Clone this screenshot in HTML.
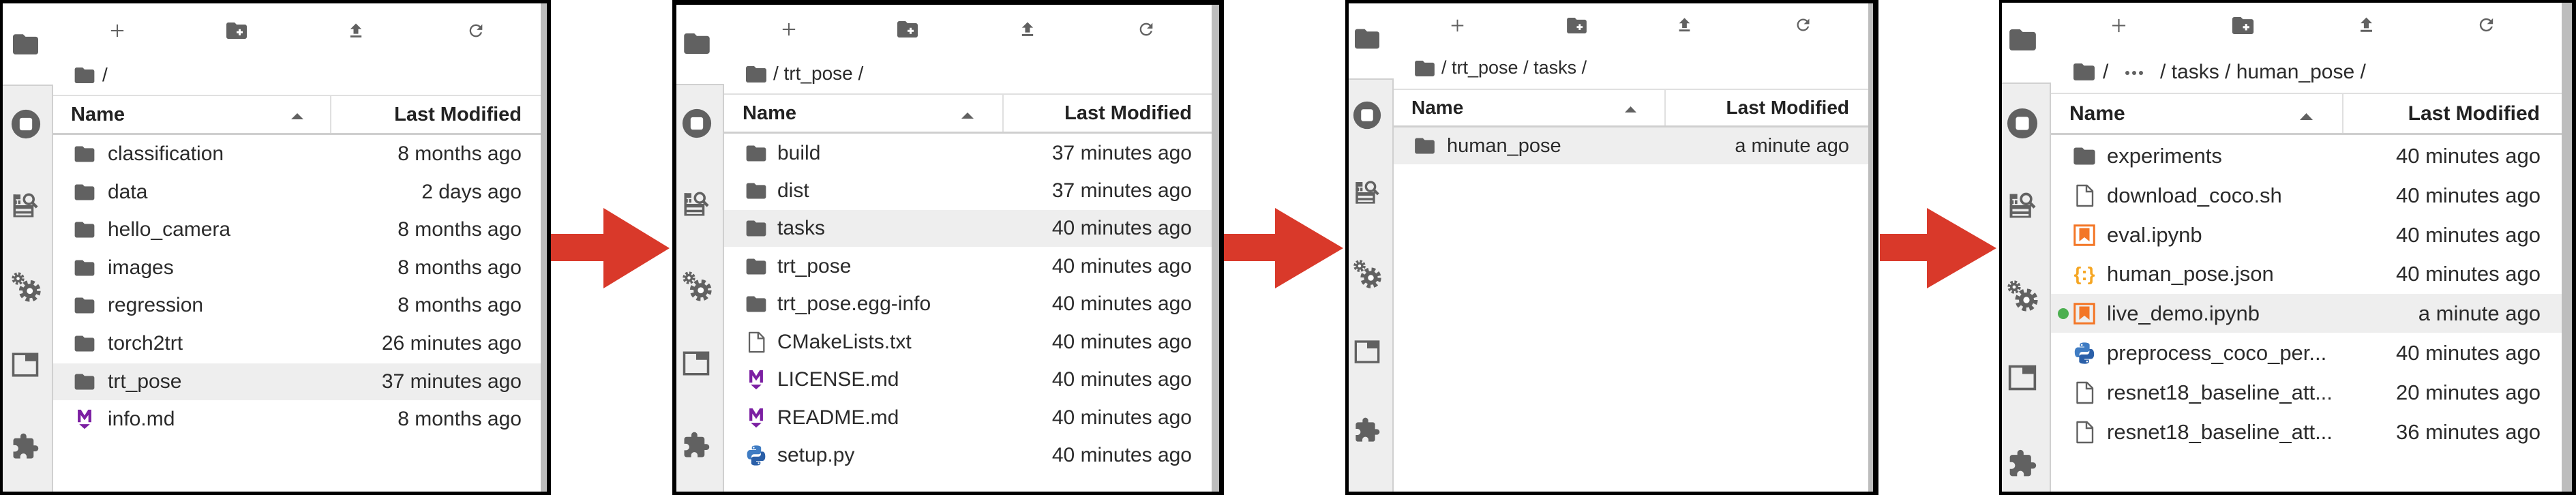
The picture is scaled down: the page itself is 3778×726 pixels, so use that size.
<!DOCTYPE html>
<html><head><meta charset="utf-8">
<style>
*{margin:0;padding:0;box-sizing:border-box}
html,body{width:3778px;height:726px;background:#fff;overflow:hidden;font-family:"Liberation Sans",Arial,sans-serif;color:#333}
.p{position:absolute;top:0;height:726px;background:#fff;overflow:hidden}
.a{position:absolute}
.bk{position:absolute;background:#000}
.sb{position:absolute;left:0;bottom:0;background:#eee;border-right:2px solid #d0d0d0;border-top:2px solid #d0d0d0}
.strip{position:absolute;top:0;bottom:0;background:#bdbdbd}
.hdr{position:absolute;border-top:2px solid #e0e0e0;border-bottom:3px solid #cfcfcf;font-weight:bold;color:#222}
.row{position:absolute;height:54px}
.row.hl{background:#eee}
.nm{position:absolute;top:0;line-height:54px;white-space:nowrap;color:#2b2b2b}
.dt{position:absolute;top:0;line-height:54px;white-space:nowrap;color:#2b2b2b}
.ic{position:absolute;top:50%;transform:translateY(-50%)}
.bc{position:absolute;white-space:nowrap;color:#2b2b2b}
.arrow{position:absolute}
</style></head><body>
<svg width="0" height="0" style="position:absolute">
<defs>
<symbol id="fold" viewBox="2 4 20 16"><path d="M10 4H4c-1.1 0-2 .9-2 2v12c0 1.1.9 2 2 2h16c1.1 0 2-.9 2-2V8c0-1.1-.9-2-2-2h-8l-2-2z" fill="#616161"/></symbol>
<symbol id="nfold" viewBox="2 4 20 16"><path d="M10 4H4c-1.1 0-2 .9-2 2v12c0 1.1.9 2 2 2h16c1.1 0 2-.9 2-2V8c0-1.1-.9-2-2-2h-8l-2-2z" fill="#616161"/><path d="M15 10.5v6M12 13.5h6" stroke="#fff" stroke-width="2"/></symbol>
<symbol id="plus" viewBox="0 0 24 24"><path d="M12 2v20M2 12h20" stroke="#616161" stroke-width="2.2"/></symbol>
<symbol id="up" viewBox="0 0 24 24"><path d="M9 16h6v-6h4l-7-7-7 7h4zm-4 2h14v2.5H5z" fill="#616161"/></symbol>
<symbol id="rf" viewBox="0 0 24 24"><path d="M17.65 6.35C16.2 4.9 14.21 4 12 4c-4.42 0-7.990 3.58-7.990 8s3.57 8 7.990 8c3.73 0 6.84-2.55 7.73-6h-2.08c-.82 2.33-3.04 4-5.65 4-3.31 0-6-2.69-6-6s2.69-6 6-6c1.66 0 3.14.69 4.22 1.78L13 11h7V4l-2.35 2.35z" fill="#616161"/></symbol>
<symbol id="stop" viewBox="0 0 24 24"><circle cx="12" cy="12" r="11.5" fill="#616161"/><rect x="7" y="7" width="10" height="10" rx="1.8" fill="#fff"/></symbol>
<symbol id="prop" viewBox="0 0 24 24"><g fill="#616161"><rect x="2" y="3" width="6" height="4"/><rect x="2" y="8" width="3" height="3"/><rect x="6" y="8" width="2" height="3"/><path d="M2 12h17v10H2zM4 15v2h13v-2zM4 19v1.5h13V19z" fill-rule="evenodd"/><rect x="2" y="3" width="2" height="19"/></g><circle cx="15" cy="7" r="4" fill="none" stroke="#616161" stroke-width="2"/><path d="M17.8 9.8l4 4" stroke="#616161" stroke-width="2.4"/></symbol>
<symbol id="gear" viewBox="0 0 24 24"><g fill="#616161"><circle cx="6" cy="5.5" r="3"/><circle cx="6" cy="5.5" r="3.8" fill="none" stroke="#616161" stroke-width="2" stroke-dasharray="1.8 1.2"/><circle cx="15" cy="15" r="5.5"/><circle cx="15" cy="15" r="6.8" fill="none" stroke="#616161" stroke-width="3" stroke-dasharray="3 2.4"/></g><circle cx="6" cy="5.5" r="1.2" fill="#fff"/><circle cx="15" cy="15" r="2.3" fill="#fff"/></symbol>
<symbol id="tab" viewBox="0 0 24 24"><rect x="2" y="3" width="20" height="18" fill="none" stroke="#616161" stroke-width="2"/><rect x="12" y="3" width="10" height="6" fill="#616161"/></symbol>
<symbol id="puz" viewBox="0 0 24 24"><path d="M20.5 11H19V7c0-1.1-.9-2-2-2h-4V3.5C13 2.12 11.88 1 10.5 1S8 2.12 8 3.5V5H4c-1.1 0-1.990.9-1.990 2v3.8H3.5c1.490 0 2.7 1.21 2.7 2.7s-1.21 2.7-2.7 2.7H2V20c0 1.1.9 2 2 2h3.8v-1.5c0-1.490 1.21-2.7 2.7-2.7 1.490 0 2.7 1.21 2.7 2.7V22H17c1.1 0 2-.9 2-2v-4h1.5c1.38 0 2.5-1.12 2.5-2.5S21.88 11 20.5 11z" fill="#616161"/></symbol>
<symbol id="file" viewBox="0 0 24 24"><path d="M5 2h9.5L20 7.5V22H5z" fill="none" stroke="#616161" stroke-width="1.6" stroke-linejoin="round"/><path d="M14 2.3V8h5.8" fill="none" stroke="#616161" stroke-width="1.6"/></symbol>
<symbol id="md" viewBox="0 0 24 24"><path d="M5 2h3.2l3.8 6 3.8-6H19v13h-3V7.5l-4 5.5-4-5.5V15H5z" fill="#7b1fa2"/><path d="M6.5 17h11l-5.5 5z" fill="#7b1fa2"/></symbol>
<symbol id="nb" viewBox="0 0 24 24"><rect x="2.5" y="2.5" width="19" height="19" fill="none" stroke="#f37626" stroke-width="2"/><path d="M7 5h10v13l-5-4-5 4z" fill="#f37626"/></symbol>
<symbol id="py" viewBox="0 0 24 24"><path d="M11.9 1C7 1 7.3 3.1 7.3 3.1v2.2h4.7V6H5.4S2 5.6 2 11c0 5.4 3 5.2 3 5.2h1.8v-2.5s-.1-3 2.9-3h4.9s2.8 0 2.8-2.7V3.5S17.8 1 11.9 1zM9.3 2.5a.9.9 0 110 1.8.9.9 0 010-1.8z" fill="#3f7cc3"/><path d="M12.1 23c4.9 0 4.6-2.1 4.6-2.1v-2.2H12V18h6.6s3.4.4 3.4-5c0-5.4-3-5.2-3-5.2h-1.8v2.5s.1 3-2.9 3H9.4s-2.8 0-2.8 2.7v4.5S6.2 23 12.1 23zm2.6-1.5a.9.9 0 110-1.8.9.9 0 010 1.8z" fill="#2a5fa8"/></symbol>
</defs></svg>

<!-- ARROWS -->
<svg class="arrow" style="left:0;top:0" width="3778" height="726">
<polygon points="807,343 885,343 885,305 982,364 885,423 885,383 807,383" fill="#d9392a"/>
<polygon points="1795,343 1870,343 1870,305 1970,364 1870,423 1870,383 1795,383" fill="#d9392a"/>
<polygon points="2757,343 2826,343 2826,305 2928,364 2826,423 2826,383 2757,383" fill="#d9392a"/>
</svg>

<!-- PANEL 1 -->
<div class="p" style="left:0;width:808px;font-size:30px">
  <div class="sb" style="top:124px;width:78px"></div>
  <svg class="a" style="left:19px;top:50px" width="37" height="30"><use href="#fold"/></svg>
  <svg class="a" style="left:16px;top:160px" width="44" height="44"><use href="#stop"/></svg>
  <svg class="a" style="left:16px;top:280px" width="42" height="42"><use href="#prop"/></svg>
  <svg class="a" style="left:15px;top:398px" width="46" height="46"><use href="#gear"/></svg>
  <svg class="a" style="left:16px;top:514px" width="42" height="42"><use href="#tab"/></svg>
  <svg class="a" style="left:16px;top:634px" width="42" height="42"><use href="#puz"/></svg>
  <svg class="a" style="left:161px;top:34px" width="22" height="22"><use href="#plus"/></svg>
  <svg class="a" style="left:331px;top:33px" width="32" height="24"><use href="#nfold"/></svg>
  <svg class="a" style="left:508px;top:31px" width="28" height="28"><use href="#up"/></svg>
  <svg class="a" style="left:684px;top:31px" width="28" height="28"><use href="#rf"/></svg>
  <svg class="a" style="left:109px;top:99px" width="30" height="23"><use href="#fold"/></svg>
  <div class="bc" style="left:150px;top:94px;line-height:32px;font-size:28px">/</div>
  <div class="hdr" style="left:78px;top:139px;width:715px;height:59px;font-size:29px">
    <div class="a" style="left:26px;top:0;line-height:54px">Name</div>
    <svg class="a" style="left:349px;top:24px" width="18" height="10"><polygon points="0,10 9,1 18,10" fill="#616161"/></svg>
    <div class="a" style="left:406px;top:0;width:2px;height:54px;background:#e0e0e0"></div>
    <div class="a" style="right:28px;top:0;line-height:54px">Last Modified</div>
  </div>
  <div style="position:absolute;left:78px;top:0;width:715px">
    <div class="row" style="top:199px;width:715px"><svg class="ic" style="left:31px" width="30" height="23"><use href="#fold"/></svg><span class="nm" style="left:80px">classification</span><span class="dt" style="right:28px">8 months ago</span></div>
    <div class="row" style="top:255px;width:715px"><svg class="ic" style="left:31px" width="30" height="23"><use href="#fold"/></svg><span class="nm" style="left:80px">data</span><span class="dt" style="right:28px">2 days ago</span></div>
    <div class="row" style="top:310px;width:715px"><svg class="ic" style="left:31px" width="30" height="23"><use href="#fold"/></svg><span class="nm" style="left:80px">hello_camera</span><span class="dt" style="right:28px">8 months ago</span></div>
    <div class="row" style="top:366px;width:715px"><svg class="ic" style="left:31px" width="30" height="23"><use href="#fold"/></svg><span class="nm" style="left:80px">images</span><span class="dt" style="right:28px">8 months ago</span></div>
    <div class="row" style="top:421px;width:715px"><svg class="ic" style="left:31px" width="30" height="23"><use href="#fold"/></svg><span class="nm" style="left:80px">regression</span><span class="dt" style="right:28px">8 months ago</span></div>
    <div class="row" style="top:477px;width:715px"><svg class="ic" style="left:31px" width="30" height="23"><use href="#fold"/></svg><span class="nm" style="left:80px">torch2trt</span><span class="dt" style="right:28px">26 minutes ago</span></div>
    <div class="row hl" style="top:533px;width:715px"><svg class="ic" style="left:31px" width="30" height="23"><use href="#fold"/></svg><span class="nm" style="left:80px">trt_pose</span><span class="dt" style="right:28px">37 minutes ago</span></div>
    <div class="row" style="top:588px;width:715px"><svg class="ic" style="left:29px" width="34" height="34"><use href="#md"/></svg><span class="nm" style="left:80px">info.md</span><span class="dt" style="right:28px">8 months ago</span></div>
  </div>
  <div class="strip" style="left:793px;width:9px"></div>
  <div class="bk" style="left:0;top:0;width:808px;height:5px"></div>
  <div class="bk" style="left:0;bottom:0;width:808px;height:5px"></div>
  <div class="bk" style="left:0;top:0;width:4px;height:726px"></div>
  <div class="bk" style="left:802px;top:0;width:6px;height:726px"></div>
</div>

<!-- PANEL 2 -->
<div class="p" style="left:986px;width:809px;font-size:30px">
  <div class="sb" style="top:123px;width:76px"></div>
  <svg class="a" style="left:17px;top:49px" width="38" height="30"><use href="#fold"/></svg>
  <svg class="a" style="left:14px;top:159px" width="44" height="44"><use href="#stop"/></svg>
  <svg class="a" style="left:14px;top:278px" width="42" height="42"><use href="#prop"/></svg>
  <svg class="a" style="left:13px;top:397px" width="46" height="46"><use href="#gear"/></svg>
  <svg class="a" style="left:14px;top:512px" width="42" height="42"><use href="#tab"/></svg>
  <svg class="a" style="left:14px;top:632px" width="42" height="42"><use href="#puz"/></svg>
  <svg class="a" style="left:160px;top:32px" width="22" height="22"><use href="#plus"/></svg>
  <svg class="a" style="left:329px;top:31px" width="32" height="24"><use href="#nfold"/></svg>
  <svg class="a" style="left:507px;top:29px" width="28" height="28"><use href="#up"/></svg>
  <svg class="a" style="left:681px;top:29px" width="28" height="28"><use href="#rf"/></svg>
  <svg class="a" style="left:108px;top:97px" width="30" height="24"><use href="#fold"/></svg>
  <div class="bc" style="left:148px;top:92px;line-height:32px;font-size:28px">/ trt_pose /</div>
  <div class="hdr" style="left:76px;top:137px;width:715px;height:59px;font-size:29px">
    <div class="a" style="left:27px;top:0;line-height:54px">Name</div>
    <svg class="a" style="left:348px;top:25px" width="18" height="10"><polygon points="0,10 9,1 18,10" fill="#616161"/></svg>
    <div class="a" style="left:408px;top:0;width:2px;height:54px;background:#e0e0e0"></div>
    <div class="a" style="right:29px;top:0;line-height:54px">Last Modified</div>
  </div>
  <div style="position:absolute;left:76px;top:0;width:715px">
    <div class="row" style="top:198px;width:715px"><svg class="ic" style="left:32px" width="30" height="23"><use href="#fold"/></svg><span class="nm" style="left:78px">build</span><span class="dt" style="right:29px">37 minutes ago</span></div>
    <div class="row" style="top:253px;width:715px"><svg class="ic" style="left:32px" width="30" height="23"><use href="#fold"/></svg><span class="nm" style="left:78px">dist</span><span class="dt" style="right:29px">37 minutes ago</span></div>
    <div class="row hl" style="top:308px;width:715px"><svg class="ic" style="left:32px" width="30" height="23"><use href="#fold"/></svg><span class="nm" style="left:78px">tasks</span><span class="dt" style="right:29px">40 minutes ago</span></div>
    <div class="row" style="top:364px;width:715px"><svg class="ic" style="left:32px" width="30" height="23"><use href="#fold"/></svg><span class="nm" style="left:78px">trt_pose</span><span class="dt" style="right:29px">40 minutes ago</span></div>
    <div class="row" style="top:419px;width:715px"><svg class="ic" style="left:32px" width="30" height="23"><use href="#fold"/></svg><span class="nm" style="left:78px">trt_pose.egg-info</span><span class="dt" style="right:29px">40 minutes ago</span></div>
    <div class="row" style="top:475px;width:715px"><svg class="ic" style="left:30px" width="34" height="34"><use href="#file"/></svg><span class="nm" style="left:78px">CMakeLists.txt</span><span class="dt" style="right:29px">40 minutes ago</span></div>
    <div class="row" style="top:530px;width:715px"><svg class="ic" style="left:30px" width="34" height="34"><use href="#md"/></svg><span class="nm" style="left:78px">LICENSE.md</span><span class="dt" style="right:29px">40 minutes ago</span></div>
    <div class="row" style="top:586px;width:715px"><svg class="ic" style="left:30px" width="34" height="34"><use href="#md"/></svg><span class="nm" style="left:78px">README.md</span><span class="dt" style="right:29px">40 minutes ago</span></div>
    <div class="row" style="top:641px;width:715px"><svg class="ic" style="left:31px" width="32" height="32"><use href="#py"/></svg><span class="nm" style="left:78px">setup.py</span><span class="dt" style="right:29px">40 minutes ago</span></div>
  </div>
  <div class="strip" style="left:791px;width:11px"></div>
  <div class="bk" style="left:0;top:0;width:809px;height:7px"></div>
  <div class="bk" style="left:0;bottom:0;width:809px;height:5px"></div>
  <div class="bk" style="left:0;top:0;width:6px;height:726px"></div>
  <div class="bk" style="left:802px;top:0;width:7px;height:726px"></div>
</div>

<!-- PANEL 3 -->
<div class="p" style="left:1973px;width:782px;font-size:29px">
  <div class="sb" style="top:115px;width:71px"></div>
  <svg class="a" style="left:14px;top:42px" width="36" height="30"><use href="#fold"/></svg>
  <svg class="a" style="left:11px;top:148px" width="42" height="42"><use href="#stop"/></svg>
  <svg class="a" style="left:12px;top:262px" width="40" height="40"><use href="#prop"/></svg>
  <svg class="a" style="left:10px;top:380px" width="44" height="44"><use href="#gear"/></svg>
  <svg class="a" style="left:12px;top:496px" width="40" height="40"><use href="#tab"/></svg>
  <svg class="a" style="left:12px;top:611px" width="40" height="40"><use href="#puz"/></svg>
  <svg class="a" style="left:154px;top:27px" width="21" height="21"><use href="#plus"/></svg>
  <svg class="a" style="left:324px;top:26px" width="31" height="23"><use href="#nfold"/></svg>
  <svg class="a" style="left:484px;top:23px" width="27" height="27"><use href="#up"/></svg>
  <svg class="a" style="left:658px;top:23px" width="27" height="27"><use href="#rf"/></svg>
  <svg class="a" style="left:102px;top:89px" width="29" height="23"><use href="#fold"/></svg>
  <div class="bc" style="left:141px;top:84px;line-height:31px;font-size:27px">/ trt_pose / tasks /</div>
  <div class="hdr" style="left:71px;top:130px;width:696px;height:57px;font-size:28px">
    <div class="a" style="left:26px;top:0;line-height:52px">Name</div>
    <svg class="a" style="left:339px;top:23px" width="17" height="10"><polygon points="0,10 8.5,1 17,10" fill="#616161"/></svg>
    <div class="a" style="left:397px;top:0;width:2px;height:52px;background:#e0e0e0"></div>
    <div class="a" style="right:28px;top:0;line-height:52px">Last Modified</div>
  </div>
  <div style="position:absolute;left:71px;top:0;width:696px">
    <div class="row hl" style="top:187px;width:696px"><svg class="ic" style="left:31px" width="29" height="23"><use href="#fold"/></svg><span class="nm" style="left:78px">human_pose</span><span class="dt" style="right:28px">a minute ago</span></div>
  </div>
  <div class="strip" style="left:767px;width:7px"></div>
  <div class="bk" style="left:0;top:0;width:782px;height:5px"></div>
  <div class="bk" style="left:0;bottom:0;width:782px;height:5px"></div>
  <div class="bk" style="left:0;top:0;width:5px;height:726px"></div>
  <div class="bk" style="left:774px;top:0;width:8px;height:726px"></div>
</div>

<!-- PANEL 4 -->
<div class="p" style="left:2932px;width:846px;font-size:31px">
  <div class="sb" style="top:121px;width:76px"></div>
  <svg class="a" style="left:15px;top:43px" width="39" height="31"><use href="#fold"/></svg>
  <svg class="a" style="left:11px;top:158px" width="46" height="46"><use href="#stop"/></svg>
  <svg class="a" style="left:12px;top:279px" width="44" height="44"><use href="#prop"/></svg>
  <svg class="a" style="left:10px;top:410px" width="48" height="48"><use href="#gear"/></svg>
  <svg class="a" style="left:12px;top:532px" width="44" height="44"><use href="#tab"/></svg>
  <svg class="a" style="left:12px;top:658px" width="44" height="44"><use href="#puz"/></svg>
  <svg class="a" style="left:164px;top:26px" width="23" height="23"><use href="#plus"/></svg>
  <svg class="a" style="left:341px;top:25px" width="33" height="25"><use href="#nfold"/></svg>
  <svg class="a" style="left:524px;top:22px" width="29" height="29"><use href="#up"/></svg>
  <svg class="a" style="left:700px;top:22px" width="29" height="29"><use href="#rf"/></svg>
  <svg class="a" style="left:109px;top:93px" width="31" height="25"><use href="#fold"/></svg>
  <div class="bc" style="left:152px;top:89px;line-height:33px;font-size:30px">/</div>
  <svg class="a" style="left:184px;top:102px" width="30" height="10"><circle cx="4" cy="5" r="3" fill="#616161"/><circle cx="14" cy="5" r="3" fill="#616161"/><circle cx="24" cy="5" r="3" fill="#616161"/></svg>
  <div class="bc" style="left:236px;top:89px;line-height:33px;font-size:30px">/ tasks / human_pose /</div>
  <div class="hdr" style="left:76px;top:136px;width:749px;height:62px;font-size:30px">
    <div class="a" style="left:27px;top:0;line-height:57px">Name</div>
    <svg class="a" style="left:365px;top:27px" width="19" height="11"><polygon points="0,11 9.5,1 19,11" fill="#616161"/></svg>
    <div class="a" style="left:427px;top:0;width:2px;height:57px;background:#e0e0e0"></div>
    <div class="a" style="right:32px;top:0;line-height:57px">Last Modified</div>
  </div>
  <div style="position:absolute;left:76px;top:0;width:749px">
    <div class="row" style="top:200px;height:57px;width:749px"><svg class="ic" style="left:33px" width="32" height="25"><use href="#fold"/></svg><span class="nm" style="left:82px;line-height:57px">experiments</span><span class="dt" style="right:31px;line-height:57px">40 minutes ago</span></div>
    <div class="row" style="top:258px;height:57px;width:749px"><svg class="ic" style="left:31px" width="36" height="36"><use href="#file"/></svg><span class="nm" style="left:82px;line-height:57px">download_coco.sh</span><span class="dt" style="right:31px;line-height:57px">40 minutes ago</span></div>
    <div class="row" style="top:316px;height:57px;width:749px"><svg class="ic" style="left:31px" width="36" height="36"><use href="#nb"/></svg><span class="nm" style="left:82px;line-height:57px">eval.ipynb</span><span class="dt" style="right:31px;line-height:57px">40 minutes ago</span></div>
    <div class="row" style="top:373px;height:57px;width:749px"><svg class="ic" style="left:31px" width="36" height="36"><text x="18" y="27" text-anchor="middle" font-family="Liberation Sans, sans-serif" font-size="28" font-weight="bold" fill="#f5a623">{:}</text></svg><span class="nm" style="left:82px;line-height:57px">human_pose.json</span><span class="dt" style="right:31px;line-height:57px">40 minutes ago</span></div>
    <div class="row hl" style="top:431px;height:57px;width:749px"><svg class="ic" style="left:9px" width="18" height="18"><circle cx="9" cy="9" r="8" fill="#4caf50"/></svg><svg class="ic" style="left:31px" width="36" height="36"><use href="#nb"/></svg><span class="nm" style="left:82px;line-height:57px">live_demo.ipynb</span><span class="dt" style="right:31px;line-height:57px">a minute ago</span></div>
    <div class="row" style="top:489px;height:57px;width:749px"><svg class="ic" style="left:32px" width="34" height="34"><use href="#py"/></svg><span class="nm" style="left:82px;line-height:57px">preprocess_coco_per...</span><span class="dt" style="right:31px;line-height:57px">40 minutes ago</span></div>
    <div class="row" style="top:547px;height:57px;width:749px"><svg class="ic" style="left:31px" width="36" height="36"><use href="#file"/></svg><span class="nm" style="left:82px;line-height:57px">resnet18_baseline_att...</span><span class="dt" style="right:31px;line-height:57px">20 minutes ago</span></div>
    <div class="row" style="top:605px;height:57px;width:749px"><svg class="ic" style="left:31px" width="36" height="36"><use href="#file"/></svg><span class="nm" style="left:82px;line-height:57px">resnet18_baseline_att...</span><span class="dt" style="right:31px;line-height:57px">36 minutes ago</span></div>
  </div>
  <div class="strip" style="left:825px;width:15px"></div>
  <div class="bk" style="left:0;top:0;width:846px;height:4px"></div>
  <div class="bk" style="left:0;bottom:0;width:846px;height:5px"></div>
  <div class="bk" style="left:0;top:0;width:4px;height:726px"></div>
  <div class="bk" style="left:840px;top:0;width:6px;height:726px"></div>
</div>
</body></html>
